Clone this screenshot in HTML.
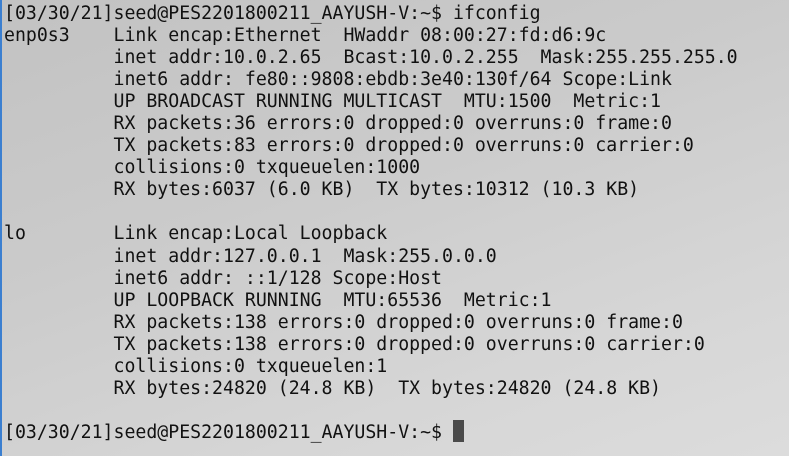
<!DOCTYPE html>
<html><head><style>
html,body{margin:0;padding:0;}
body{width:789px;height:456px;overflow:hidden;position:relative;
background:linear-gradient(160deg,#c2c2c2 0%,#cbcbcb 40%,#d6d6d6 75%,#dcdcdc 100%);}
.bar{position:absolute;left:0;top:0;width:2px;height:456px;background:#3b7fd0;}
pre{position:absolute;left:4px;top:3px;margin:0;font-family:"DejaVu Sans Mono","Liberation Mono",monospace;
font-size:18.2px;line-height:22.05px;color:#111;}
.cur{position:absolute;left:453px;top:420px;width:11px;height:22px;background:#4a4a4a;}
</style></head><body>
<div class="bar"></div>
<pre>[03/30/21]seed@PES2201800211_AAYUSH-V:~$ ifconfig
enp0s3    Link encap:Ethernet  HWaddr 08:00:27:fd:d6:9c  
          inet addr:10.0.2.65  Bcast:10.0.2.255  Mask:255.255.255.0
          inet6 addr: fe80::9808:ebdb:3e40:130f/64 Scope:Link
          UP BROADCAST RUNNING MULTICAST  MTU:1500  Metric:1
          RX packets:36 errors:0 dropped:0 overruns:0 frame:0
          TX packets:83 errors:0 dropped:0 overruns:0 carrier:0
          collisions:0 txqueuelen:1000 
          RX bytes:6037 (6.0 KB)  TX bytes:10312 (10.3 KB)

lo        Link encap:Local Loopback  
          inet addr:127.0.0.1  Mask:255.0.0.0
          inet6 addr: ::1/128 Scope:Host
          UP LOOPBACK RUNNING  MTU:65536  Metric:1
          RX packets:138 errors:0 dropped:0 overruns:0 frame:0
          TX packets:138 errors:0 dropped:0 overruns:0 carrier:0
          collisions:0 txqueuelen:1 
          RX bytes:24820 (24.8 KB)  TX bytes:24820 (24.8 KB)

[03/30/21]seed@PES2201800211_AAYUSH-V:~$ </pre>
<div class="cur"></div>
</body></html>
